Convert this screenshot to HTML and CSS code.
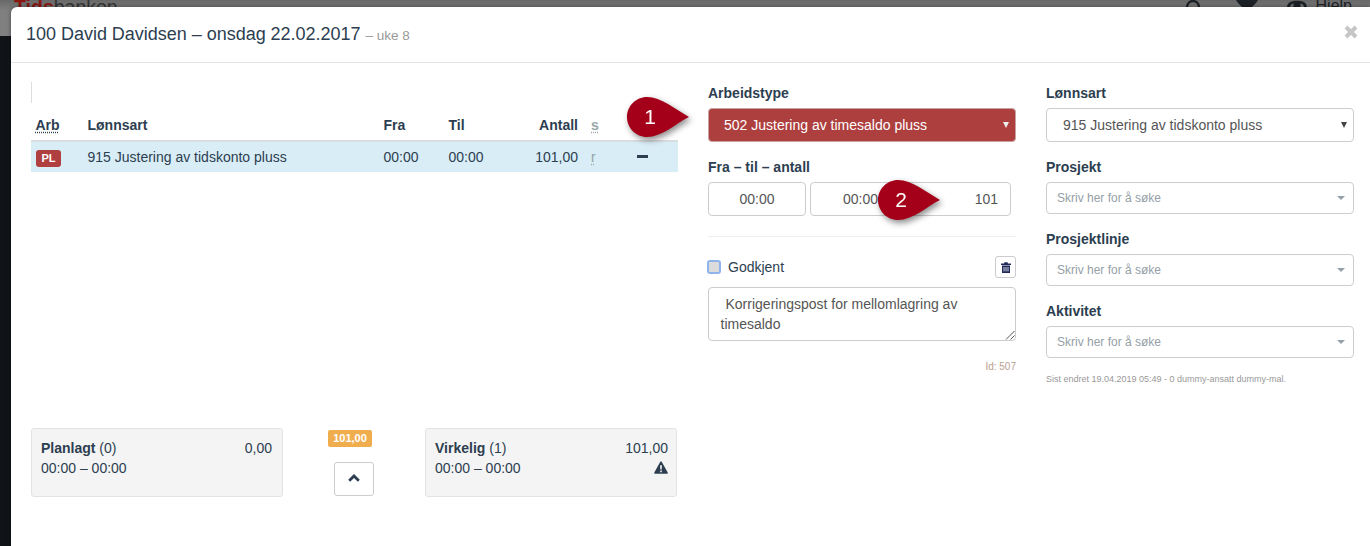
FILE: index.html
```html
<!DOCTYPE html>
<html lang="no">
<head>
<meta charset="utf-8">
<title>Tidsbanken</title>
<link rel="stylesheet" href="styles.css">
</head>
<body>
<div class="page-nav">
  <span class="brand"><b>Tids</b>banken</span>
  <div class="nav-right">
    <svg class="ico-a" width="16" height="8" viewBox="0 0 16 8"><circle cx="8" cy="7" r="6" fill="none" stroke="#1c2126" stroke-width="2.4"/></svg>
    <svg class="ico-b" width="22" height="8" viewBox="0 0 22 8"><path d="M0 0h22l-2 3-5 5H7L2 3z" fill="#1c2126"/></svg>
    <svg class="ico-c" width="20" height="8" viewBox="0 0 20 8"><path d="M0 8C0 3 3 .8 10 .8S20 3 20 8h-3c0-3-1.500-4-3.500-4.500V8h-7V3.500C4.500 4 3 5 3 8z" fill="#1c2126"/></svg>
    <span class="help">Hjelp</span>
  </div>
</div>
<div class="modal">
  <header class="modal-head">
    <h4 class="modal-title">100 David Davidsen – onsdag 22.02.2017 <small>– uke 8</small></h4>
    <svg class="close" width="14" height="14" viewBox="0 0 14 14" role="img" aria-label="Lukk"><path d="M2 2l10 10M12 2 2 12" stroke="#c6c6c6" stroke-width="4"/></svg>
  </header>
  <div class="modal-body">
    <section class="col-left">
      <div class="toolbar-stub"></div>
      <div class="grid-row grid-head">
        <span class="c-arb"><abbr class="first">Arb</abbr></span>
        <span class="c-lonn">Lønnsart</span>
        <span class="c-fra">Fra</span>
        <span class="c-til">Til</span>
        <span class="c-ant">Antall</span>
        <span class="c-s"><abbr class="muted">s</abbr></span>
        <span class="c-g"><abbr>G</abbr></span>
      </div>
      <div class="grid-row grid-item">
        <span class="c-arb"><span class="pl">PL</span></span>
        <span class="c-lonn">915 Justering av tidskonto pluss</span>
        <span class="c-fra">00:00</span>
        <span class="c-til">00:00</span>
        <span class="c-ant">101,00</span>
        <span class="c-s"><abbr class="muted">r</abbr></span>
        <span class="c-g"><i class="dash"></i></span>
      </div>
      <div class="summary">
        <div class="well well-a">
          <div class="well-line"><span><b>Planlagt</b> (0)</span><span>0,00</span></div>
          <div class="well-line"><span>00:00 – 00:00</span></div>
        </div>
        <div class="mid">
          <span class="badge">101,00</span>
          <button class="up" type="button" aria-label="Opp">
            <svg width="12" height="8" viewBox="0 0 12 8"><path d="M1.200 6.800 6 2l4.800 4.800" fill="none" stroke="#2c3e50" stroke-width="2.800"/></svg>
          </button>
        </div>
        <div class="well well-b">
          <div class="well-line"><span><b>Virkelig</b> (1)</span><span>101,00</span></div>
          <div class="well-line"><span>00:00 – 00:00</span>
            <svg class="warn" width="14" height="13" viewBox="0 0 14 13"><path d="M7 1.200 13 12H1z" fill="#2c3e50" stroke="#2c3e50" stroke-width="1.600" stroke-linejoin="round"/><path d="M6.100 4.200h1.800l-.2 4.400H6.300zM6.200 9.600h1.600v1.600H6.200z" fill="#f4f4f4"/></svg>
          </div>
        </div>
      </div>
    </section>
    <section class="col-mid">
      <label class="lbl">Arbeidstype</label>
      <div class="sel sel-red">502 Justering av timesaldo pluss<i class="caret-s"></i></div>
      <label class="lbl lbl-2">Fra – til – antall</label>
      <div class="times">
        <div class="inp t1">00:00</div>
        <div class="inp t2"><span>00:00</span><span>101</span></div>
      </div>
      <hr class="sep">
      <div class="check-row">
        <span class="check-wrap"><i class="check"></i>Godkjent</span>
        <button class="trash" type="button" aria-label="Slett">
          <svg width="10" height="11" viewBox="0 0 10 11"><path d="M0 1.500h3L3.500.3h3L7 1.500h3V3H0zM1 3.600h8V11H1z" fill="#1f2a5a"/><path d="M3 5v4.400M5 5v4.400M7 5v4.400" stroke="#fff" stroke-width=".8"/></svg>
        </button>
      </div>
      <div class="note"><span class="note-in">Korrigeringspost for mellomlagring av timesaldo</span>
        <svg class="grip" width="10" height="10" viewBox="0 0 10 10"><path d="M9.500 1 1 9.500M9.500 5.500 5.500 9.500" stroke="#555" stroke-width="1"/></svg>
      </div>
      <div class="id-line">Id: 507</div>
    </section>
    <section class="col-right">
      <label class="lbl">Lønnsart</label>
      <div class="sel sel-white">915 Justering av tidskonto pluss<i class="caret-s dark"></i></div>
      <label class="lbl lbl-3">Prosjekt</label>
      <div class="search">Skriv her for å søke<i class="caret-g"></i></div>
      <label class="lbl lbl-3">Prosjektlinje</label>
      <div class="search">Skriv her for å søke<i class="caret-g"></i></div>
      <label class="lbl lbl-3">Aktivitet</label>
      <div class="search">Skriv her for å søke<i class="caret-g"></i></div>
      <div class="changed">Sist endret 19.04.2019 05:49 - 0 dummy-ansatt dummy-mal.</div>
    </section>
  </div>
</div>
<div class="callout callout-1"><svg width="64" height="42" viewBox="0 0 64 42"><path d="M1 21C1 10 10 1 21 1c14 0 28 12 42 20C49 28 36 41 21 41 10 41 1 32 1 21z" fill="#a50019"/></svg><span>1</span></div>
<div class="callout callout-2"><svg width="64" height="42" viewBox="0 0 64 42"><path d="M1 21C1 10 10 1 21 1c14 0 28 12 42 20C49 28 36 41 21 41 10 41 1 32 1 21z" fill="#a50019"/></svg><span>2</span></div>
</body>
</html>
```
FILE: styles.css
```css
* { box-sizing: border-box; }
html, body { margin: 0; height: 100%; }
body {
  width: 1370px; height: 546px; overflow: hidden; position: relative;
  background: #101418;
  font-family: "Liberation Sans", Arial, sans-serif;
  font-size: 14px; line-height: 20px; color: #2c3e50;
}
.page-nav {
  height: 36px; background: linear-gradient(#686868, #808080 30%); display: flex; justify-content: space-between;
  padding: 0 18px 0 14px; overflow: hidden; color: #222;
}
.brand { font-size: 19.500px; line-height: 22px; color: #333; margin-top: -4px; }
.brand b { color: #8a1712; }
.nav-right { display: flex; align-items: flex-start; height: 20px; }
.ico-b { margin-left: 35px; }
.ico-c { margin-left: 29px; }
.help { font-size: 16px; margin-left: 9px; line-height: 18px; margin-top: -3px; color: #1c2126; }
.modal {
  position: absolute; left: 11px; top: 7px; width: 1359px; height: 539px;
  background: #fff; border-radius: 6px 0 0 0; box-shadow: 0 0 4px rgba(0,0,0,.45);
}
.modal-head {
  height: 56px; border-bottom: 1px solid #e5e5e5; padding: 15px 12px 0 15px; display: flex; justify-content: space-between;
}
.modal-title { margin: 0; font-size: 18px; font-weight: 400; line-height: 24px; color: #2c3e50; letter-spacing: -.02px; }
.modal-title small { font-size: 13.500px; color: #999; }
.close { display: block; margin-top: 3px; }
.modal-body { display: flex; padding: 19px 16px 0 20px; }
.col-left { width: 647px; margin-right: 30px; }
.toolbar-stub { height: 21px; border-left: 1px solid #ddd; }
.grid-row { display: flex; align-items: center; }
.grid-head { height: 39px; padding-top: 6px; border-bottom: 2px solid #dadde0; font-weight: 700; }
.grid-item { background: #d9edf7; height: 30px; }
.c-arb { width: 56.500px; padding-left: 5px; }
.first { margin-left: -.5px; }
.c-lonn { width: 296px; }
.c-fra { width: 65px; }
.c-til { width: 65px; }
.c-ant { width: 64.500px; text-align: right; }
.c-s { width: 46px; padding-left: 13px; }
.c-g { width: 54px; display: flex; justify-content: center; margin-left: -9px; }
abbr { text-decoration: underline dotted; text-underline-offset: 2px; }
abbr.muted { color: #95a5a6; font-weight: 700; }
.grid-item abbr.muted { font-weight: 400; }
.pl {
  display: inline-block; background: #b03f3f; color: #fff; font-size: 11px; font-weight: 700;
  line-height: 17px; height: 17px; width: 25px; text-align: center; border-radius: 3px;
}
.dash { display: block; width: 11px; height: 3px; background: #2c3e50; margin-top: -1px; }
.summary { display: flex; margin-top: 256px; }
.well {
  width: 252px; height: 69px; background: #f4f4f4; border: 1px solid #e3e3e3; border-radius: 3px;
  padding: 9px;
}
.well-a { padding-right: 10px; }
.well-b { padding-right: 8px; }
.well-line { display: flex; justify-content: space-between; align-items: center; }
.warn { margin-top: -2px; }
.mid { width: 142px; display: flex; flex-direction: column; align-items: center; padding-top: 2px; }
.badge {
  background: #f0ad4e; color: #fff; font-size: 11px; font-weight: 700; line-height: 17px; height: 17px;
  padding: 0 5.500px; border-radius: 2px; margin-right: 8px;
}
.up {
  width: 40px; height: 34px; margin-top: 15px; background: #fff; border: 1px solid #ccc; border-radius: 3px;
  display: flex; align-items: center; justify-content: center; padding: 0 0 2px;
}
.col-mid { width: 308px; margin-right: 30px; padding-top: 1px; }
.col-right { width: 308px; padding-top: 1px; }
.lbl { display: block; font-weight: 700; height: 20px; margin-bottom: 5px; line-height: 20px; }
.lbl-2 { margin-top: 15px; }
.lbl-3 { margin-top: 15px; }
.sel {
  height: 34px; border-radius: 4px; border: 1px solid #ccc; line-height: 32px; position: relative;
}
.sel-red { background: #ad3f3f; color: #fff; border-color: #c9a0a0; padding: 0 15px; }
.sel-white { background: #fff; color: #555; padding: 0 16px; }
.caret-s {
  position: absolute; right: 6px; top: 13px; width: 0; height: 0;
  border-left: 3.500px solid transparent; border-right: 3.500px solid transparent; border-top: 6px solid #eee;
}
.caret-s.dark { border-top-color: #444; }
.times { display: flex; gap: 4px; }
.inp {
  height: 34px; background: #fff; border: 1px solid #ccc; border-radius: 4px; color: #555; line-height: 32px;
}
.t1 { width: 98px; text-align: center; }
.t2 { width: 201px; display: flex; justify-content: space-between; padding: 0 12px 0 32px; }
.sep { border: 0; border-top: 1px solid #eee; margin: 20px 0 0; }
.check-row { display: flex; justify-content: space-between; align-items: center; margin-top: 18px; height: 24px; }
.check-wrap { display: flex; align-items: center; gap: 7px; color: #2c3e50; margin-left: -1px; }
.check {
  display: block; width: 14px; height: 14px; background: #dcdcdc; border: 2px solid #8fb4ec; border-radius: 3px;
}
.trash {
  width: 21px; height: 22px; padding: 0; background: #fff; border: 1px solid #ccc; border-radius: 3px;
  display: flex; align-items: center; justify-content: center;
}
.note {
  margin-top: 8px; height: 54px; border: 1px solid #ccc; border-radius: 4px; padding: 6px 11.500px; color: #555; position: relative; line-height: 20px;
  text-indent: 5px;
}
.note-in { display: block; }
.grip { position: absolute; right: 0; bottom: 0; }
.id-line { text-align: right; font-size: 10px; color: #b8a090; margin-top: 19px; line-height: 14px; }
.search {
  height: 32px; border: 1px solid #ccc; border-radius: 4px; padding: 0 10px; font-size: 12px; line-height: 30px; color: #95a0a8; position: relative;
}
.caret-g {
  position: absolute; right: 8px; top: 13px; width: 0; height: 0;
  border-left: 4px solid transparent; border-right: 4px solid transparent; border-top: 4px solid #95a0a8;
}
.changed { font-size: 9px; color: #999; line-height: 14px; margin-top: 14px; }
.callout { position: absolute; width: 64px; height: 42px; filter: drop-shadow(2px 3px 3px rgba(0,0,0,.45)); }
.callout svg { display: block; }
.callout span { position: absolute; left: 0; top: 0; width: 48px; text-align: center; color: #fff; font-size: 21px; line-height: 42px; }
.callout-1 { left: 626px; top: 96px; }
.callout-2 { left: 877px; top: 179px; }
```
